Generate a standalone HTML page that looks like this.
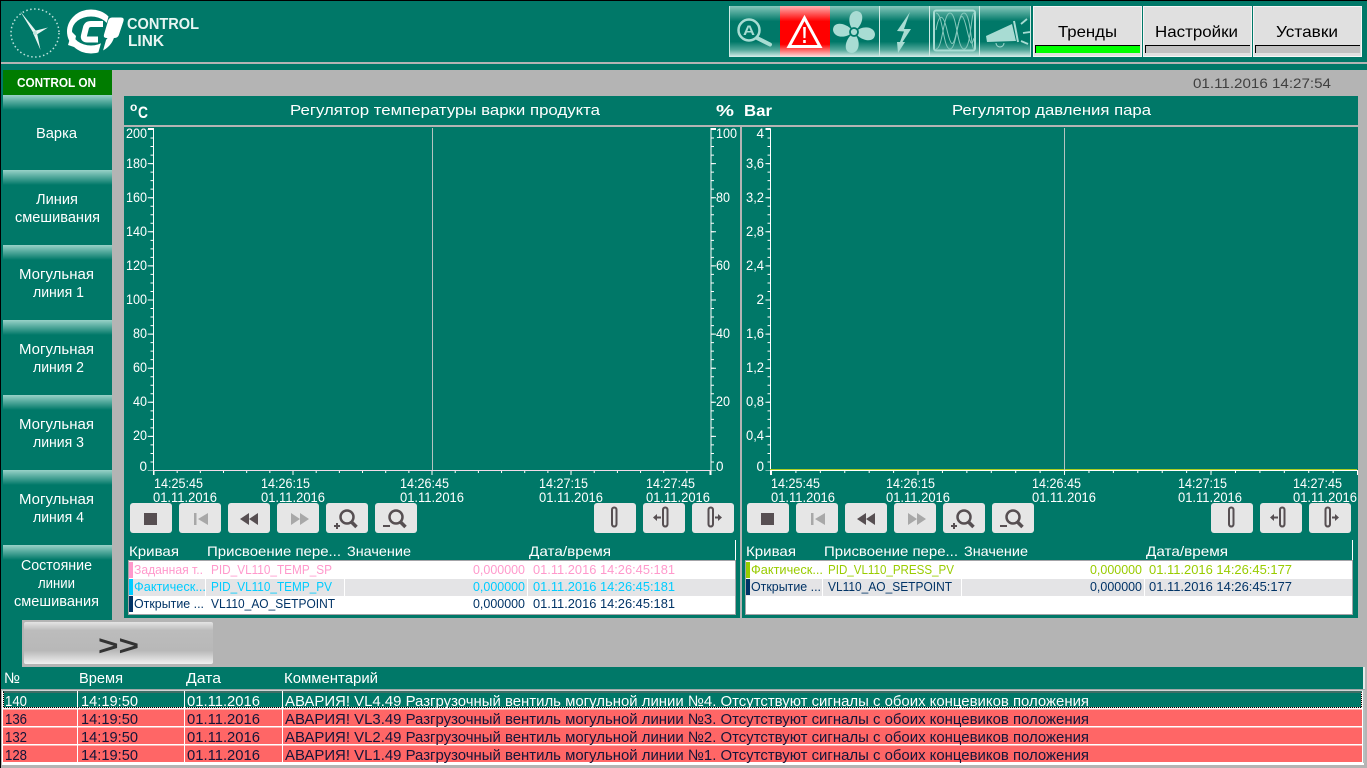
<!DOCTYPE html>
<html lang="ru"><head><meta charset="utf-8"><title>Control Link</title>
<style>
html,body{margin:0;padding:0;width:1367px;height:768px;overflow:hidden;background:#b4b4b4}
svg{display:block}
text{font-family:"Liberation Sans",sans-serif;font-size:14px;fill:#fff;white-space:pre}
.n{font-size:15px}
.l{font-size:13px}
.t{font-size:15px;fill:#151538}
.a{font-size:13.5px}
.b{font-size:16px;fill:#000}
</style></head><body>
<svg xmlns="http://www.w3.org/2000/svg" width="1367" height="768" viewBox="0 0 1367 768">
<defs>
<linearGradient id="nav" x1="0" y1="0" x2="0" y2="1"><stop offset="0" stop-color="#98d2c8"/><stop offset="1" stop-color="#007868"/></linearGradient>
<linearGradient id="ic" x1="0" y1="0" x2="0" y2="1"><stop offset="0" stop-color="#86c8bc"/><stop offset=".3" stop-color="#007868"/><stop offset=".7" stop-color="#007868"/><stop offset=".86" stop-color="#52a89a"/><stop offset="1" stop-color="#d8efeb"/></linearGradient>
<linearGradient id="icr" x1="0" y1="0" x2="0" y2="1"><stop offset="0" stop-color="#ffb0b0"/><stop offset=".3" stop-color="#ff0000"/><stop offset=".75" stop-color="#ff0000"/><stop offset="1" stop-color="#ffe0e0"/></linearGradient>
<linearGradient id="gb" x1="0" y1="0" x2="0" y2="1"><stop offset="0" stop-color="#e4e4e4"/><stop offset=".2" stop-color="#bcbcbc"/><stop offset=".68" stop-color="#b8b8b8"/><stop offset="1" stop-color="#f0f0f0"/></linearGradient>
<g id="ctl">
<g fill="#e6e6e6"><rect x="130" y="503" width="42" height="30" rx="3"/><rect x="179" y="503" width="42" height="30" rx="3"/><rect x="228" y="503" width="42" height="30" rx="3"/><rect x="277" y="503" width="42" height="30" rx="3"/><rect x="326" y="503" width="42" height="30" rx="3"/><rect x="375" y="503" width="42" height="30" rx="3"/><rect x="594" y="503" width="42" height="30" rx="3"/><rect x="643" y="503" width="42" height="30" rx="3"/><rect x="692" y="503" width="42" height="30" rx="3"/></g>
<rect x="144" y="513" width="13" height="12" fill="#574f52"/>
<path d="M194 513h2.500v12h-2.500zM208 513l-10 6 10 6zM291 513l9 6-9 6zM300 513l9 6-9 6z" fill="#a8a8a8"/>
<path d="M249 513l-9 6 9 6zM258 513l-9 6 9 6z" fill="#574f52"/>
<g fill="none" stroke="#574f52"><circle cx="347" cy="517" r="6.500" stroke-width="2.500"/><path d="M351.500 522l5 5" stroke-width="3.500"/><circle cx="396" cy="517" r="6.500" stroke-width="2.500"/><path d="M400.500 522l5 5" stroke-width="3.500"/><path d="M334 526h6M337 523v6M383 526h7" stroke-width="2"/>
<rect x="612" y="507.500" width="4.500" height="19" rx="2.200" stroke-width="2"/><rect x="663" y="507.500" width="4.500" height="19" rx="2.200" stroke-width="2"/><rect x="708.500" y="507.500" width="4.500" height="19" rx="2.200" stroke-width="2"/><path d="M655 517.500h6M715 517.500h5" stroke-width="2"/></g>
<path d="M653 517.500l4-3.500v7zM722 517.500l-4-3.500v7z" fill="#574f52"/>
</g>
</defs>

<rect width="1367" height="768" fill="#b4b4b4"/>
<rect x="0" y="0" width="1367" height="62" fill="#007868"/>
<rect x="0" y="64" width="1367" height="6" fill="#007868"/>
<rect x="0" y="70" width="112" height="550" fill="#007868"/>
<rect x="0" y="620" width="22" height="47" fill="#007868"/>
<rect x="0" y="667" width="1363" height="22" fill="#007868"/>
<rect x="1363" y="667" width="2" height="22" fill="#e8e8e8"/>
<rect x="0" y="0" width="1367" height="1" fill="#000"/>
<rect x="0" y="0" width="1" height="768" fill="#000"/>

<!-- clock -->
<circle cx="35" cy="33" r="24" fill="none" stroke="#bfe3dd" stroke-width="1.500" stroke-dasharray="1.500 2.500"/>
<path d="M20 11L36.500 31.500L34 34ZM34 31L48 27.500L36 35ZM33 33L37 33L40.500 50Z" fill="#e8f5f2"/>
<circle cx="35" cy="33" r="2" fill="#bfe3dd"/>
<!-- logo -->
<ellipse cx="91" cy="31.500" rx="24" ry="22" fill="#fff"/>
<ellipse cx="91" cy="31" rx="19" ry="14.500" fill="#007868"/>
<path d="M74 47L68 45L72 32L76 36Z" fill="#fff"/>
<path d="M103 24H91Q87 24 86 27.500L84 35.500Q83 39.500 87.500 39.500H98" fill="none" stroke="#fff" stroke-width="6"/>
<path d="M113 8L100 54" stroke="#007868" stroke-width="4" fill="none"/>
<path d="M112 17.500H121Q124.500 17.500 123.500 21L119 34.500Q118 38 114.500 38H106.500Q103 38 104 34.500L108 21Q109 17.500 112 17.500Z" fill="#fff"/>
<text x="127" y="29" textLength="72" lengthAdjust="spacingAndGlyphs" style="font-size:16px;font-weight:bold;fill:#e8f5f2">CONTROL</text>
<text x="128" y="46" textLength="36" lengthAdjust="spacingAndGlyphs" style="font-size:16px;font-weight:bold;fill:#e8f5f2">LINK</text>

<!-- top icons -->
<rect x="729" y="6" width="302" height="51" fill="url(#ic)"/>
<rect x="780" y="6" width="50" height="51" fill="url(#icr)"/>
<g stroke="#cfe9e4" stroke-width="1" fill="none"><path d="M729.500 6v51M879.500 6v51M929.500 6v51M979.500 6v51M1030.500 6v51"/></g>
<g fill="none" stroke="#a8dcd3">
<circle cx="749" cy="30" r="10.500" stroke-width="2.500"/><path d="M757 38l13 6.500" stroke-width="4" stroke-linecap="round"/>
<rect x="934" y="10.500" width="41" height="40" rx="2" stroke-width="2"/>
<g stroke-width="1" stroke="#86c8bc"><path d="M936 13C943 13 943 49 950 49S957 13 964 13S971 49 974 49"/><path d="M936 49C943 49 943 13 950 13S957 49 964 49S971 13 974 13"/><path d="M936 30C939 13 943 13 947 30S953 49 957 30S963 13 967 30S972 45 974 38"/></g>
<path d="M1021 24l6-5M1023 33l7-1M1021 41l7 3" stroke-width="1.800"/>
</g>
<text x="743" y="35" textLength="12" lengthAdjust="spacingAndGlyphs" style="font-size:14px;font-weight:bold;fill:#a8dcd3">A</text>
<path d="M804.500 18L789 46.500H820Z" fill="none" stroke="#fff" stroke-width="3"/>
<text x="801.500" y="43" textLength="6" lengthAdjust="spacingAndGlyphs" style="font-size:23px;font-weight:bold;fill:#fff">!</text>
<g fill="#a8dcd3"><path d="M854 31C847 24 848 12 856 11C864 11 864 21 858 28Z"/><path d="M855 32C862 25 874 26 875 34C875 42 865 42 858 36Z"/><path d="M854 33C861 40 860 52 852 53C844 53 844 43 850 36Z"/><path d="M853 32C846 39 834 38 833 30C833 22 843 22 850 28Z"/></g>
<circle cx="854" cy="32" r="4" fill="#a8dcd3" stroke="#007868" stroke-width="1.800"/>
<path d="M910 12L897 31L904 31.500L900 42L897 42L898 53L905 42L902.500 42L911 29L904 29Z" fill="#a8dcd3"/>
<path d="M986 36L1012 24L1016 41L987 42Z" fill="#a8dcd3"/><path d="M1014 21L1018 42" stroke="#a8dcd3" stroke-width="2"/><path d="M996 43a4 4 0 0 0 8 0" fill="none" stroke="#a8dcd3"/>

<!-- top buttons -->
<g fill="#e0e0e0" stroke="#f6f6f6" stroke-width="1"><rect x="1033.500" y="6.500" width="108" height="50"/><rect x="1143.500" y="6.500" width="108" height="50"/><rect x="1253.500" y="6.500" width="108" height="50"/></g>
<rect x="1035" y="45" width="105" height="8" fill="#00ff00"/><rect x="1145" y="45" width="105" height="8" fill="#c0c0c0"/><rect x="1255" y="45" width="105" height="8" fill="#c0c0c0"/>
<path d="M1035.500 53V45.500H1140M1145.500 53V45.500H1250M1255.500 53V45.500H1360" stroke="#000" fill="none"/>
<text class="b" x="1058" y="37" textLength="59" lengthAdjust="spacingAndGlyphs">Тренды</text>
<text class="b" x="1155" y="37" textLength="83" lengthAdjust="spacingAndGlyphs">Настройки</text>
<text class="b" x="1276" y="37" textLength="62" lengthAdjust="spacingAndGlyphs">Уставки</text>

<text x="1193" y="88" textLength="138" lengthAdjust="spacingAndGlyphs" style="font-size:14px;fill:#404040">01.11.2016 14:27:54</text>

<!-- nav -->
<rect x="3" y="70" width="109" height="25" fill="#007c00"/>
<text x="17" y="87" textLength="79" lengthAdjust="spacingAndGlyphs" style="font-size:12.500px;font-weight:bold">CONTROL ON</text>
<g fill="url(#nav)"><rect x="3" y="95" width="109" height="15"/><rect x="3" y="170" width="109" height="15"/><rect x="3" y="245" width="109" height="15"/><rect x="3" y="320" width="109" height="15"/><rect x="3" y="395" width="109" height="15"/><rect x="3" y="470" width="109" height="15"/><rect x="3" y="545" width="109" height="15"/></g>
<text class="n" x="36" y="138" textLength="41" lengthAdjust="spacingAndGlyphs">Варка</text>
<text class="n" x="36" y="204" textLength="42" lengthAdjust="spacingAndGlyphs">Линия</text>
<text class="n" x="15" y="222" textLength="85" lengthAdjust="spacingAndGlyphs">смешивания</text>
<text class="n" x="19" y="279" textLength="75" lengthAdjust="spacingAndGlyphs">Могульная</text>
<text class="n" x="33" y="297" textLength="51" lengthAdjust="spacingAndGlyphs">линия 1</text>
<text class="n" x="19" y="354" textLength="75" lengthAdjust="spacingAndGlyphs">Могульная</text>
<text class="n" x="33" y="372" textLength="51" lengthAdjust="spacingAndGlyphs">линия 2</text>
<text class="n" x="19" y="429" textLength="75" lengthAdjust="spacingAndGlyphs">Могульная</text>
<text class="n" x="33" y="447" textLength="51" lengthAdjust="spacingAndGlyphs">линия 3</text>
<text class="n" x="19" y="504" textLength="75" lengthAdjust="spacingAndGlyphs">Могульная</text>
<text class="n" x="33" y="522" textLength="51" lengthAdjust="spacingAndGlyphs">линия 4</text>
<text class="n" x="21" y="570" textLength="71" lengthAdjust="spacingAndGlyphs">Состояние</text>
<text class="n" x="38" y="588" textLength="37" lengthAdjust="spacingAndGlyphs">линии</text>
<text class="n" x="14" y="606" textLength="85" lengthAdjust="spacingAndGlyphs">смешивания</text>

<!-- main panel -->
<rect x="124" y="96" width="1234" height="522" fill="#007868"/>
<rect x="124" y="125" width="1234" height="2" fill="#b4b4b4"/>
<rect x="740" y="127" width="2" height="491" fill="#b4b4b4"/>
<text x="130" y="111" style="font-size:12px;font-weight:bold">o</text>
<text x="138" y="118" textLength="10" lengthAdjust="spacingAndGlyphs" style="font-size:17px;font-weight:bold">C</text>
<text class="n" x="290" y="115" textLength="310" lengthAdjust="spacingAndGlyphs">Регулятор температуры варки продукта</text>
<text x="716" y="116" textLength="18" lengthAdjust="spacingAndGlyphs" style="font-size:16px;font-weight:bold">%</text>
<text x="744" y="116" textLength="28" lengthAdjust="spacingAndGlyphs" style="font-size:16px;font-weight:bold">Bar</text>
<text class="n" x="952" y="115" textLength="199" lengthAdjust="spacingAndGlyphs">Регулятор давления пара</text>

<!-- axes -->
<g fill="none" stroke="#fff">
<path d="M148 128.500h5.500V475M711 475V128.500h5M770.500 128.500h-5M770.500 128.500V475" stroke-width="1"/>
<path d="M152 129v341" stroke-width="3" stroke-dasharray="1 7.525"/>
<path d="M150.500 129v341.500" stroke-width="5.500" stroke-dasharray="1 33.100"/>
<path d="M712.500 129v341" stroke-width="3" stroke-dasharray="1 7.525"/>
<path d="M713.500 129v341.500" stroke-width="5" stroke-dasharray="1 33.100"/>
<path d="M769 129v341" stroke-width="3" stroke-dasharray="1 7.525"/>
<path d="M768 129v341.500" stroke-width="5" stroke-dasharray="1 33.100"/>
<path d="M153.500 471.500H710" stroke-width="3" stroke-dasharray="1 22.170"/>
<path d="M153.500 472.500H711" stroke-width="5" stroke-dasharray="1 138"/>
<path d="M771 471.500H1358" stroke-width="3" stroke-dasharray="1 23.420"/>
<path d="M771 472.500H1358" stroke-width="5" stroke-dasharray="1 145.500"/>
<path d="M153 470.500H711" stroke="#f4dcea"/>
<path d="M770 470.500H1357"/>
<path d="M770 469.500H1357" stroke="#a8cc20"/>
</g>
<path d="M432.500 128V470M1064.500 128V470" stroke="#b4c4c0" fill="none"/>

<g text-anchor="end">
<text class="a" x="147" y="138" textLength="21" lengthAdjust="spacingAndGlyphs">200</text>
<text class="a" x="147" y="168" textLength="21" lengthAdjust="spacingAndGlyphs">180</text>
<text class="a" x="147" y="202" textLength="21" lengthAdjust="spacingAndGlyphs">160</text>
<text class="a" x="147" y="236" textLength="21" lengthAdjust="spacingAndGlyphs">140</text>
<text class="a" x="147" y="270" textLength="21" lengthAdjust="spacingAndGlyphs">120</text>
<text class="a" x="147" y="304" textLength="21" lengthAdjust="spacingAndGlyphs">100</text>
<text class="a" x="147" y="338" textLength="14" lengthAdjust="spacingAndGlyphs">80</text>
<text class="a" x="147" y="372" textLength="14" lengthAdjust="spacingAndGlyphs">60</text>
<text class="a" x="147" y="406" textLength="14" lengthAdjust="spacingAndGlyphs">40</text>
<text class="a" x="147" y="440" textLength="14" lengthAdjust="spacingAndGlyphs">20</text>
<text class="a" x="147" y="471">0</text>
<text class="a" x="764" y="138">4</text>
<text class="a" x="764" y="168" textLength="18" lengthAdjust="spacingAndGlyphs">3,6</text>
<text class="a" x="764" y="202" textLength="18" lengthAdjust="spacingAndGlyphs">3,2</text>
<text class="a" x="764" y="236" textLength="18" lengthAdjust="spacingAndGlyphs">2,8</text>
<text class="a" x="764" y="270" textLength="18" lengthAdjust="spacingAndGlyphs">2,4</text>
<text class="a" x="764" y="304">2</text>
<text class="a" x="764" y="338" textLength="18" lengthAdjust="spacingAndGlyphs">1,6</text>
<text class="a" x="764" y="372" textLength="18" lengthAdjust="spacingAndGlyphs">1,2</text>
<text class="a" x="764" y="406" textLength="18" lengthAdjust="spacingAndGlyphs">0,8</text>
<text class="a" x="764" y="440" textLength="18" lengthAdjust="spacingAndGlyphs">0,4</text>
<text class="a" x="764" y="471">0</text>
</g>
<text class="a" x="716" y="138" textLength="21" lengthAdjust="spacingAndGlyphs">100</text>
<text class="a" x="716" y="202" textLength="14" lengthAdjust="spacingAndGlyphs">80</text>
<text class="a" x="716" y="270" textLength="14" lengthAdjust="spacingAndGlyphs">60</text>
<text class="a" x="716" y="338" textLength="14" lengthAdjust="spacingAndGlyphs">40</text>
<text class="a" x="716" y="406" textLength="14" lengthAdjust="spacingAndGlyphs">20</text>
<text class="a" x="716" y="471">0</text>

<!-- time labels -->
<text class="a" x="154" y="488" textLength="49" lengthAdjust="spacingAndGlyphs">14:25:45</text><text class="a" x="153" y="502" textLength="64" lengthAdjust="spacingAndGlyphs">01.11.2016</text>
<text class="a" x="261" y="488" textLength="49" lengthAdjust="spacingAndGlyphs">14:26:15</text><text class="a" x="261" y="502" textLength="64" lengthAdjust="spacingAndGlyphs">01.11.2016</text>
<text class="a" x="400" y="488" textLength="49" lengthAdjust="spacingAndGlyphs">14:26:45</text><text class="a" x="400" y="502" textLength="64" lengthAdjust="spacingAndGlyphs">01.11.2016</text>
<text class="a" x="539" y="488" textLength="49" lengthAdjust="spacingAndGlyphs">14:27:15</text><text class="a" x="539" y="502" textLength="64" lengthAdjust="spacingAndGlyphs">01.11.2016</text>
<text class="a" x="646" y="488" textLength="49" lengthAdjust="spacingAndGlyphs">14:27:45</text><text class="a" x="646" y="502" textLength="64" lengthAdjust="spacingAndGlyphs">01.11.2016</text>
<text class="a" x="771" y="488" textLength="49" lengthAdjust="spacingAndGlyphs">14:25:45</text><text class="a" x="771" y="502" textLength="64" lengthAdjust="spacingAndGlyphs">01.11.2016</text>
<text class="a" x="886" y="488" textLength="49" lengthAdjust="spacingAndGlyphs">14:26:15</text><text class="a" x="886" y="502" textLength="64" lengthAdjust="spacingAndGlyphs">01.11.2016</text>
<text class="a" x="1032" y="488" textLength="49" lengthAdjust="spacingAndGlyphs">14:26:45</text><text class="a" x="1032" y="502" textLength="64" lengthAdjust="spacingAndGlyphs">01.11.2016</text>
<text class="a" x="1178" y="488" textLength="49" lengthAdjust="spacingAndGlyphs">14:27:15</text><text class="a" x="1178" y="502" textLength="64" lengthAdjust="spacingAndGlyphs">01.11.2016</text>
<text class="a" x="1293" y="488" textLength="49" lengthAdjust="spacingAndGlyphs">14:27:45</text><text class="a" x="1293" y="502" textLength="64" lengthAdjust="spacingAndGlyphs">01.11.2016</text>

<use href="#ctl"/>
<use href="#ctl" transform="translate(617 0)"/>

<!-- legends -->
<path d="M735.500 540V560M1352.500 540V560" stroke="#fff"/>
<text class="n" x="129" y="556" textLength="50" lengthAdjust="spacingAndGlyphs" style="font-size:14px">Кривая</text>
<text class="n" x="207" y="556" textLength="134" lengthAdjust="spacingAndGlyphs" style="font-size:14px">Присвоение пере...</text>
<text class="n" x="347" y="556" textLength="64" lengthAdjust="spacingAndGlyphs" style="font-size:14px">Значение</text>
<text class="n" x="529" y="556" textLength="82" lengthAdjust="spacingAndGlyphs" style="font-size:14px">Дата/время</text>
<text class="n" x="746" y="556" textLength="50" lengthAdjust="spacingAndGlyphs" style="font-size:14px">Кривая</text>
<text class="n" x="824" y="556" textLength="134" lengthAdjust="spacingAndGlyphs" style="font-size:14px">Присвоение пере...</text>
<text class="n" x="964" y="556" textLength="64" lengthAdjust="spacingAndGlyphs" style="font-size:14px">Значение</text>
<text class="n" x="1146" y="556" textLength="82" lengthAdjust="spacingAndGlyphs" style="font-size:14px">Дата/время</text>

<rect x="128.500" y="560.500" width="607" height="54" fill="#fff" stroke="#a4a4a8"/>
<rect x="129" y="579" width="606" height="17" fill="#e4e4e6"/>
<path d="M205.500 579v17M344.500 579v17M527.500 579v17" stroke="#fff"/>
<rect x="129" y="562" width="4" height="16" fill="#ff99cc"/><rect x="129" y="579" width="4" height="16" fill="#00ccff"/><rect x="129" y="596" width="4" height="16" fill="#003366"/>
<text class="l" x="134" y="574" textLength="69" lengthAdjust="spacingAndGlyphs" style="fill:#ff99cc">Заданная т..</text>
<text class="l" x="211" y="574" textLength="121" lengthAdjust="spacingAndGlyphs" style="fill:#ff99cc">PID_VL110_TEMP_SP</text>
<text class="l" x="473" y="574" textLength="52" lengthAdjust="spacingAndGlyphs" style="fill:#ff99cc">0,000000</text>
<text class="l" x="533" y="574" textLength="142" lengthAdjust="spacingAndGlyphs" style="fill:#ff99cc">01.11.2016 14:26:45:181</text>
<text class="l" x="134" y="591" textLength="72" lengthAdjust="spacingAndGlyphs" style="fill:#00ccff">Фактическ...</text>
<text class="l" x="211" y="591" textLength="121" lengthAdjust="spacingAndGlyphs" style="fill:#00ccff">PID_VL110_TEMP_PV</text>
<text class="l" x="473" y="591" textLength="52" lengthAdjust="spacingAndGlyphs" style="fill:#00ccff">0,000000</text>
<text class="l" x="533" y="591" textLength="142" lengthAdjust="spacingAndGlyphs" style="fill:#00ccff">01.11.2016 14:26:45:181</text>
<text class="l" x="134" y="608" textLength="70" lengthAdjust="spacingAndGlyphs" style="fill:#003366">Открытие ...</text>
<text class="l" x="211" y="608" textLength="124" lengthAdjust="spacingAndGlyphs" style="fill:#003366">VL110_AO_SETPOINT</text>
<text class="l" x="473" y="608" textLength="52" lengthAdjust="spacingAndGlyphs" style="fill:#003366">0,000000</text>
<text class="l" x="533" y="608" textLength="142" lengthAdjust="spacingAndGlyphs" style="fill:#003366">01.11.2016 14:26:45:181</text>

<rect x="745.500" y="560.500" width="607" height="54" fill="#fff" stroke="#a4a4a8"/>
<rect x="746" y="579" width="606" height="17" fill="#e4e4e6"/>
<path d="M822.500 579v17M961.500 579v17M1144.500 579v17" stroke="#fff"/>
<rect x="746" y="562" width="4" height="16" fill="#99cc00"/><rect x="746" y="579" width="4" height="16" fill="#003366"/>
<text class="l" x="751" y="574" textLength="72" lengthAdjust="spacingAndGlyphs" style="fill:#99cc00">Фактическ...</text>
<text class="l" x="828" y="574" textLength="126" lengthAdjust="spacingAndGlyphs" style="fill:#99cc00">PID_VL110_PRESS_PV</text>
<text class="l" x="1090" y="574" textLength="52" lengthAdjust="spacingAndGlyphs" style="fill:#99cc00">0,000000</text>
<text class="l" x="1149" y="574" textLength="143" lengthAdjust="spacingAndGlyphs" style="fill:#99cc00">01.11.2016 14:26:45:177</text>
<text class="l" x="751" y="591" textLength="70" lengthAdjust="spacingAndGlyphs" style="fill:#003366">Открытие ...</text>
<text class="l" x="828" y="591" textLength="124" lengthAdjust="spacingAndGlyphs" style="fill:#003366">VL110_AO_SETPOINT</text>
<text class="l" x="1090" y="591" textLength="52" lengthAdjust="spacingAndGlyphs" style="fill:#003366">0,000000</text>
<text class="l" x="1149" y="591" textLength="143" lengthAdjust="spacingAndGlyphs" style="fill:#003366">01.11.2016 14:26:45:177</text>

<!-- >> button -->
<rect x="24" y="622" width="189" height="42" rx="2" fill="url(#gb)"/>
<text x="98" y="655" textLength="41" lengthAdjust="spacingAndGlyphs" style="font-size:28px;font-weight:bold;fill:#333">&gt;&gt;</text>

<!-- alarm table -->
<text class="n" x="4" y="683" textLength="16" lengthAdjust="spacingAndGlyphs">№</text>
<text class="n" x="79" y="683" textLength="44" lengthAdjust="spacingAndGlyphs">Время</text>
<text class="n" x="186" y="683" textLength="35" lengthAdjust="spacingAndGlyphs">Дата</text>
<text class="n" x="284" y="683" textLength="94" lengthAdjust="spacingAndGlyphs">Комментарий</text>

<rect x="2" y="689" width="1362" height="76" fill="#fff"/>
<rect x="2" y="689" width="1363" height="1.500" fill="#a0a8a8"/>
<rect x="1363" y="690" width="2" height="73" fill="#b8c0c0"/>
<rect x="3" y="691" width="1359" height="17" fill="#007868"/>
<rect x="3.500" y="692" width="1358" height="15.500" fill="none" stroke="#000" stroke-dasharray="1 1"/>
<rect x="3.500" y="692" width="1358" height="15.500" fill="none" stroke="#ffc8c8" stroke-dasharray="1 1" stroke-dashoffset="1"/>
<rect x="3" y="709.500" width="1359" height="16.500" fill="#ff6666"/>
<rect x="3" y="727.500" width="1359" height="16.500" fill="#ff6666"/>
<rect x="3" y="745.500" width="1359" height="16.500" fill="#ff6666"/>
<path d="M77.500 691v17M184.500 691v17M282.500 691v17" stroke="#fff"/>
<path d="M77.500 709v54M184.500 709v54M282.500 709v54" stroke="#fff"/>

<text class="n" x="5" y="706" textLength="22" lengthAdjust="spacingAndGlyphs">140</text>
<text class="n" x="81" y="706" textLength="57" lengthAdjust="spacingAndGlyphs">14:19:50</text>
<text class="n" x="187" y="706" textLength="73" lengthAdjust="spacingAndGlyphs">01.11.2016</text>
<text class="n" x="285" y="706" textLength="804" lengthAdjust="spacingAndGlyphs">АВАРИЯ! VL4.49 Разгрузочный вентиль могульной линии №4. Отсутствуют сигналы с обоих концевиков положения</text>
<text class="t" x="5" y="724" textLength="22" lengthAdjust="spacingAndGlyphs">136</text>
<text class="t" x="81" y="724" textLength="57" lengthAdjust="spacingAndGlyphs">14:19:50</text>
<text class="t" x="187" y="724" textLength="73" lengthAdjust="spacingAndGlyphs">01.11.2016</text>
<text class="t" x="285" y="724" textLength="804" lengthAdjust="spacingAndGlyphs">АВАРИЯ! VL3.49 Разгрузочный вентиль могульной линии №3. Отсутствуют сигналы с обоих концевиков положения</text>
<text class="t" x="5" y="742" textLength="22" lengthAdjust="spacingAndGlyphs">132</text>
<text class="t" x="81" y="742" textLength="57" lengthAdjust="spacingAndGlyphs">14:19:50</text>
<text class="t" x="187" y="742" textLength="73" lengthAdjust="spacingAndGlyphs">01.11.2016</text>
<text class="t" x="285" y="742" textLength="804" lengthAdjust="spacingAndGlyphs">АВАРИЯ! VL2.49 Разгрузочный вентиль могульной линии №2. Отсутствуют сигналы с обоих концевиков положения</text>
<text class="t" x="5" y="760" textLength="22" lengthAdjust="spacingAndGlyphs">128</text>
<text class="t" x="81" y="760" textLength="57" lengthAdjust="spacingAndGlyphs">14:19:50</text>
<text class="t" x="187" y="760" textLength="73" lengthAdjust="spacingAndGlyphs">01.11.2016</text>
<text class="t" x="285" y="760" textLength="804" lengthAdjust="spacingAndGlyphs">АВАРИЯ! VL1.49 Разгрузочный вентиль могульной линии №1. Отсутствуют сигналы с обоих концевиков положения</text>
</svg>
</body></html>
